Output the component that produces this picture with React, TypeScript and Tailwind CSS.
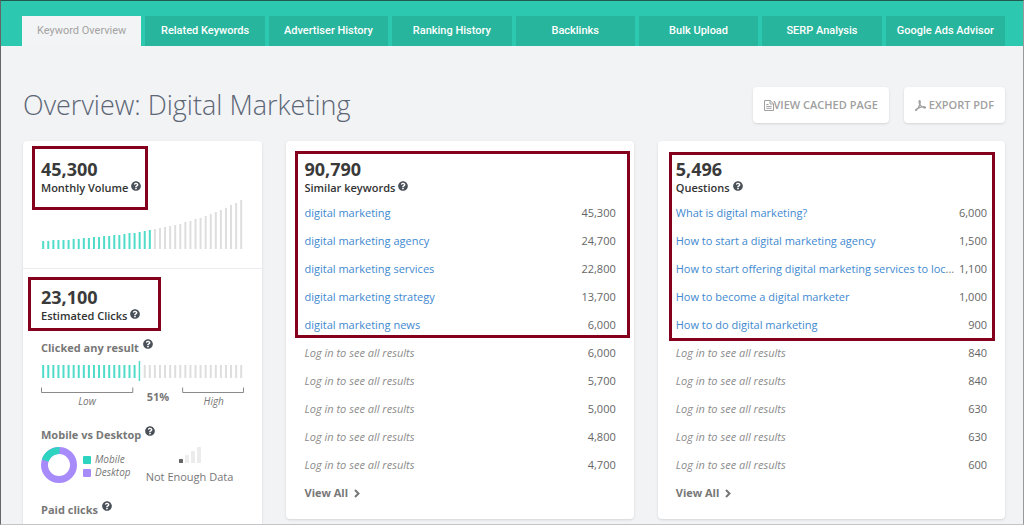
import React from 'react'
import clsx from 'clsx'
import { FaQuestionCircle } from 'react-icons/fa'

interface Row {
  term: string
  volume: string
  more?: boolean
}

const TABS = [
  'Keyword Overview',
  'Related Keywords',
  'Advertiser History',
  'Ranking History',
  'Backlinks',
  'Bulk Upload',
  'SERP Analysis',
  'Google Ads Advisor',
]

const SIMILAR: Row[] = [
  { term: 'digital marketing', volume: '45,300' },
  { term: 'digital marketing agency', volume: '24,700' },
  { term: 'digital marketing services', volume: '22,800' },
  { term: 'digital marketing strategy', volume: '13,700' },
  { term: 'digital marketing news', volume: '6,000' },
]

const QUESTIONS: Row[] = [
  { term: 'What is digital marketing?', volume: '6,000' },
  { term: 'How to start a digital marketing agency', volume: '1,500' },
  { term: 'How to start offering digital marketing services to loc', volume: '1,100', more: true },
  { term: 'How to become a digital marketer', volume: '1,000' },
  { term: 'How to do digital marketing', volume: '900' },
]

const VOLUME_BARS = [
  8, 8, 9, 9, 9, 9, 10, 10, 11, 11, 12, 12, 13, 13, 14, 14, 15, 16, 16, 17,
  18, 19, 20, 21, 22, 23, 24, 25, 27, 28, 30, 31, 33, 35, 37, 39, 41, 44, 46, 49,
]

const TEAL = '#4fdcc8'
const GREY = '#dedede'

function Help() {
  return <FaQuestionCircle className="size-[10px] shrink-0 text-[#4a5058]" aria-hidden="true" />
}

function Label({ children, muted }: { children: React.ReactNode; muted?: boolean }) {
  return (
    <h3
      className={clsx(
        'flex items-start text-[11px]',
        muted ? 'gap-1 leading-[18px] font-bold text-[#777]' : 'gap-[3px] leading-[14px] font-semibold text-[#333]'
      )}
    >
      {children}
      <Help />
    </h3>
  )
}

function Stat({ value, label }: { value: string; label: string }) {
  return (
    <>
      <p className="text-[18px] leading-6 font-bold text-[#3a3a3a]">{value}</p>
      <Label>{label}</Label>
    </>
  )
}

// Red frame drawn over the content to call it out
function Highlight({ className }: { className: string }) {
  return <div className={clsx('pointer-events-none absolute border-3 border-[#85001c]', className)} />
}

function VolumeChart() {
  return (
    <svg className="mt-1 block h-[50px] w-full" viewBox="0 0 204 50" preserveAspectRatio="none">
      {VOLUME_BARS.map((h, i) => (
        <rect key={i} x={1.2 + i * 5.09} y={50 - h} width="2" height={h} fill={i < 22 ? TEAL : GREY} />
      ))}
    </svg>
  )
}

function ClickedChart() {
  return (
    <svg className="mt-[3px] block h-[34px] w-full" viewBox="0 0 204 34" preserveAspectRatio="none">
      {VOLUME_BARS.map((_, i) => (
        <rect
          key={i}
          x={1.2 + i * 5.09}
          y={i === 19 ? 1 : 5}
          width={i === 19 ? 1.5 : 2}
          height={i === 19 ? 20 : 13}
          fill={i < 20 ? TEAL : GREY}
        />
      ))}
      <path d="M0.5 27.500v5h91.500v-5M142 27.500v5h61v-5" fill="none" stroke="#8a8a8a" />
    </svg>
  )
}

function Donut() {
  return (
    <svg className="size-9 shrink-0" viewBox="0 0 36 36">
      <circle cx="18" cy="18" r="14.5" fill="none" stroke="#a78bfa" strokeWidth="7" />
      <path d="M4.200 13.520A14.500 14.500 0 0 1 18.500 3.500" fill="none" stroke="#2dd4bf" strokeWidth="7" />
    </svg>
  )
}

function SignalIcon() {
  return (
    <svg className="h-4 w-[22px]" viewBox="0 0 22 16">
      <rect x="0" y="12" width="4" height="4" rx="0.5" fill="#666" />
      <rect x="6" y="8" width="4" height="8" rx="0.5" fill="#ececec" />
      <rect x="12" y="4" width="4" height="12" rx="0.5" fill="#ececec" />
      <rect x="18" y="0" width="4" height="16" rx="0.5" fill="#ececec" />
    </svg>
  )
}

function PageIcon() {
  return (
    <svg className="-mr-px h-[11px] w-[10px]" viewBox="0 0 10 11" fill="none" stroke="currentColor">
      <path d="M0.500 0.500h5.500l3.500 3.300v6.700h-9zM6 0.500v3.500h3.500M2.300 4.500h2.200M2.300 6.400h5.300M2.300 8.300h5.300" />
    </svg>
  )
}

function PdfIcon() {
  return (
    <svg className="size-[11px]" viewBox="0 0 12 12" fill="none" stroke="currentColor" strokeLinecap="round">
      <path d="M5 0.800c-0.900 0-0.600 2.200 0.200 3.800 0.900 1.800 2.700 3.600 4.800 4.100 1.200 0.200 1.800-0.500 1.200-0.900-0.900-0.700-4.600-0.200-6.900 0.700C2.300 9.300 0.500 10.400 0.600 11.200c0.600 0.500 2-1 3.100-3C4.900 6.200 6 2.700 5.600 1.200 5.500 0.900 5.300 0.800 5 0.800z" strokeWidth="1.400" />
    </svg>
  )
}

function Chevron() {
  return (
    <svg className="h-[9px] w-[6px]" viewBox="0 0 6 9" fill="none" stroke="currentColor" strokeWidth="2">
      <path d="M1 1l3.500 3.500L1 8" />
    </svg>
  )
}

function KeywordCard({
  value,
  label,
  rows,
  locked,
  highlight,
}: {
  value: string
  label: string
  rows: Row[]
  locked: string[]
  highlight: string
}) {
  return (
    <section className="relative rounded-sm bg-white px-[18px] pt-4 pb-3 shadow-sm">
      <Stat value={value} label={label} />
      <table className="mt-1 w-full text-[11px]">
        <tbody>
          {rows.map((row) => (
            <tr key={row.term} className="h-7">
              <td className="whitespace-nowrap text-[#777]">
                <a href="#" className="text-[#4189d0]">{row.term}</a>
                {row.more && '...'}
              </td>
              <td className="text-right text-[#666]">{row.volume}</td>
            </tr>
          ))}
          {locked.map((volume, i) => (
            <tr key={i} className="h-7">
              <td className="text-[#8c8c8c] italic">Log in to see all results</td>
              <td className="text-right text-[#666]">{volume}</td>
            </tr>
          ))}
        </tbody>
      </table>
      <a href="#" className="flex h-7 items-center gap-[6px] text-[11px] font-bold text-[#777]">
        View All
        <Chevron />
      </a>
      <Highlight className={highlight} />
    </section>
  )
}

export default function App() {
  return (
    <div className="h-screen overflow-hidden border border-t-[#225a50] border-r-[#999] border-b-[#c4c5c8] border-l-[#666] bg-[#f2f3f5] font-['Open_Sans',sans-serif]">
      <nav className="flex gap-1 bg-[#2cc9b0] pt-[15px] pr-[18px] pl-[21px] font-[Roboto,sans-serif] text-[11px]">
        {TABS.map((tab, i) => (
          <a
            key={tab}
            href="#"
            className={clsx(
              'flex h-[30px] flex-1 basis-0 items-center justify-center whitespace-nowrap',
              i === 0 ? 'bg-[#f3f4f6] text-[#a3a3a3]' : 'bg-[#28b59d] font-medium text-white'
            )}
          >
            {tab}
          </a>
        ))}
      </nav>

      <main className="pr-[18px] pl-[22px]">
        <header className="flex items-center pt-[41px] pb-[18px]">
          <h1 className="text-[27px] leading-9 font-light text-[#5c6675]">Overview: Digital Marketing</h1>
          <div className="ml-auto flex gap-[15px] text-[11px] font-semibold text-[#a0a0a0]">
            <button className="flex h-9 items-center rounded-sm bg-white px-[11px] shadow-sm">
              <PageIcon />
              VIEW CACHED PAGE
            </button>
            <button className="flex h-9 items-center gap-[3px] rounded-sm bg-white px-[11px] shadow-sm">
              <PdfIcon />
              EXPORT PDF
            </button>
          </div>
        </header>

        <div className="grid grid-cols-[240fr_348fr_348fr] items-start gap-6">
          <div className="rounded-sm bg-white shadow-sm">
            <section className="relative border-b border-[#ececee] px-[18px] pt-4 pb-[19px]">
              <Stat value="45,300" label="Monthly Volume" />
              <VolumeChart />
              <Highlight className="top-[5px] left-[9px] h-16 w-[116px]" />
            </section>

            <section className="relative px-[18px] pt-4 pb-5">
              <Stat value="23,100" label="Estimated Clicks" />
              <Highlight className="top-2 left-[5px] h-[54px] w-[133px]" />
              <div className="mt-4">
                <Label muted>Clicked any result</Label>
                <ClickedChart />
                <div className="flex h-4 text-[10px] leading-[14px] text-[#777]">
                  <span className="w-[92px] text-center italic">Low</span>
                  <span className="-mt-1 w-[50px] text-center text-[11px] font-bold">51%</span>
                  <span className="flex-1 text-center italic">High</span>
                </div>
              </div>
              <div className="mt-4">
                <Label muted>Mobile vs Desktop</Label>
                <div className="mt-[3px] flex">
                  <Donut />
                  <ul className="ml-[6px] pt-[6px] text-[10px] leading-[13px] text-[#777] italic">
                    <li className="flex items-center gap-1">
                      <span className="size-2 rounded-[1px] bg-[#2dd4bf]" />
                      Mobile
                    </li>
                    <li className="flex items-center gap-1">
                      <span className="size-2 rounded-[1px] bg-[#a78bfa]" />
                      Desktop
                    </li>
                  </ul>
                  <div className="flex flex-1 flex-col items-center gap-[6px] pl-1 text-[11px] leading-4 whitespace-nowrap text-[#777]">
                    <SignalIcon />
                    Not Enough Data
                  </div>
                </div>
              </div>
              <div className="mt-4">
                <Label muted>Paid clicks</Label>
              </div>
            </section>
          </div>

          <KeywordCard
            value="90,790"
            label="Similar keywords"
            rows={SIMILAR}
            locked={['6,000', '5,700', '5,000', '4,800', '4,700']}
            highlight="top-[10px] right-1 left-[9px] h-[187px]"
          />
          <KeywordCard
            value="5,496"
            label="Questions"
            rows={QUESTIONS}
            locked={['840', '840', '630', '630', '600']}
            highlight="top-[11px] right-[10px] left-[11px] h-[189px]"
          />
        </div>
      </main>
    </div>
  )
}
